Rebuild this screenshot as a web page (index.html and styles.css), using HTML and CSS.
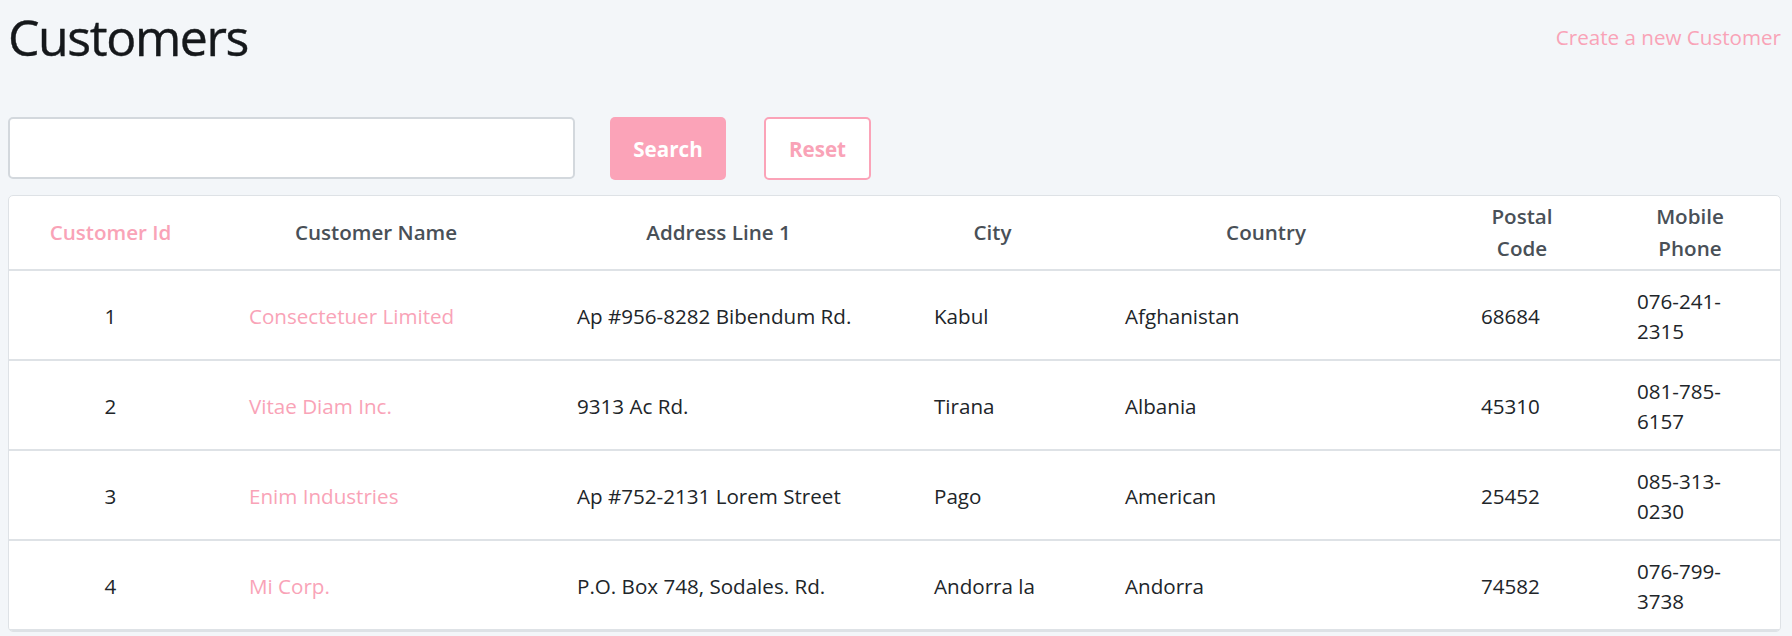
FILE: index.html
```html
<!DOCTYPE html>
<html lang="en">
<head>
<meta charset="utf-8">
<title>Customers</title>
<link rel="stylesheet" href="styles.css">
</head>
<body>
<div class="page">
  <header class="top">
    <h1 class="title">Customers</h1>
    <a class="create" href="#">Create a new Customer</a>
  </header>
  <form class="search">
    <input class="search-input" type="text">
    <button class="btn btn-fill" type="button">Search</button>
    <button class="btn btn-outline" type="button">Reset</button>
  </form>
  <div class="card">
    <table class="grid">
      <colgroup>
        <col class="c-id"><col class="c-name"><col class="c-addr"><col class="c-city"><col class="c-country"><col class="c-postal"><col class="c-phone">
      </colgroup>
      <thead>
        <tr>
          <th class="th-active">Customer Id</th>
          <th>Customer Name</th>
          <th>Address Line 1</th>
          <th>City</th>
          <th>Country</th>
          <th>Postal Code</th>
          <th>Mobile Phone</th>
        </tr>
      </thead>
      <tbody>
        <tr>
          <td class="td-id">1</td>
          <td><a class="name" href="#">Consectetuer Limited</a></td>
          <td>Ap #956-8282 Bibendum Rd.</td>
          <td>Kabul</td>
          <td>Afghanistan</td>
          <td>68684</td>
          <td class="td-phone">076-241-2315</td>
        </tr>
        <tr>
          <td class="td-id">2</td>
          <td><a class="name" href="#">Vitae Diam Inc.</a></td>
          <td>9313 Ac Rd.</td>
          <td>Tirana</td>
          <td>Albania</td>
          <td>45310</td>
          <td class="td-phone">081-785-6157</td>
        </tr>
        <tr>
          <td class="td-id">3</td>
          <td><a class="name" href="#">Enim Industries</a></td>
          <td>Ap #752-2131 Lorem Street</td>
          <td>Pago</td>
          <td>American</td>
          <td>25452</td>
          <td class="td-phone">085-313-0230</td>
        </tr>
        <tr>
          <td class="td-id">4</td>
          <td><a class="name" href="#">Mi Corp.</a></td>
          <td>P.O. Box 748, Sodales. Rd.</td>
          <td>Andorra la</td>
          <td>Andorra</td>
          <td>74582</td>
          <td class="td-phone">076-799-3738</td>
        </tr>
      </tbody>
    </table>
  </div>
</div>
</body>
</html>
```
FILE: styles.css
```css
* { box-sizing: border-box; }
html, body { margin: 0; padding: 0; }
body {
  background: #f3f6f9;
  font-family: "Open Sans", "Noto Sans", sans-serif;
  font-size: 20.6px;
  line-height: 30px;
  color: #212529;
  overflow: hidden;
}
.page {
  padding: 0 11px 0 8px;
}
.top {
  display: flex;
  justify-content: space-between;
  align-items: flex-start;
  padding-top: 7px;
  height: 117px;
}
.title {
  margin: 0;
  font-size: 50px;
  line-height: 60px;
  font-weight: 400;
  letter-spacing: -1.4px;
  color: #15181b;
  -webkit-text-stroke: 0.4px #15181b;
}
.create {
  margin-top: 15px;
  color: #f9a3b7;
  text-decoration: none;
}
.search {
  display: flex;
  align-items: flex-start;
  margin: 0;
}
.search-input {
  width: 567px;
  height: 62px;
  border: 2px solid #d3d8dd;
  border-radius: 5px;
  background: #fff;
  font: inherit;
  padding: 0 15px;
}
.btn {
  height: 63px;
  border-radius: 5px;
  font-family: inherit;
  font-size: 20.6px;
  font-weight: 700;
  padding: 0;
  cursor: pointer;
}
.btn-fill {
  margin-left: 35px;
  width: 116px;
  background: #fba3b8;
  border: none;
  color: #fff;
}
.btn-outline {
  margin-left: 38px;
  width: 107px;
  background: #fff;
  border: 2px solid #fba3b8;
  color: #f9a3b7;
}
.card {
  margin-top: 15px;
  background: #fff;
  border: 1px solid #dee2e6;
  border-radius: 5px;
  overflow: hidden;
}
.grid {
  width: 100%;
  border-collapse: collapse;
  table-layout: fixed;
}
.c-id { width: 203px; }
.c-name { width: 328px; }
.c-addr { width: 357px; }
.c-city { width: 191px; }
.c-country { width: 356px; }
.c-postal { width: 156px; }
.grid th {
  padding: 4px 37px 5px;
  line-height: 32px;
  font-weight: 600;
  color: #495057;
  text-align: center;
  vertical-align: middle;
  border-bottom: 2px solid #dee2e6;
}
.grid th.th-active { color: #f9a3b7; }
.grid td {
  padding: 15px 10px 13px 37px;
  line-height: 30px;
  text-align: left;
  vertical-align: middle;
  border-bottom: 2px solid #dee2e6;
}
.grid td.td-id {
  text-align: center;
  padding-left: 37px;
  padding-right: 37px;
}
.grid td.td-phone { padding-right: 37px; }
.name {
  color: #f9a3b7;
  text-decoration: none;
}
```
